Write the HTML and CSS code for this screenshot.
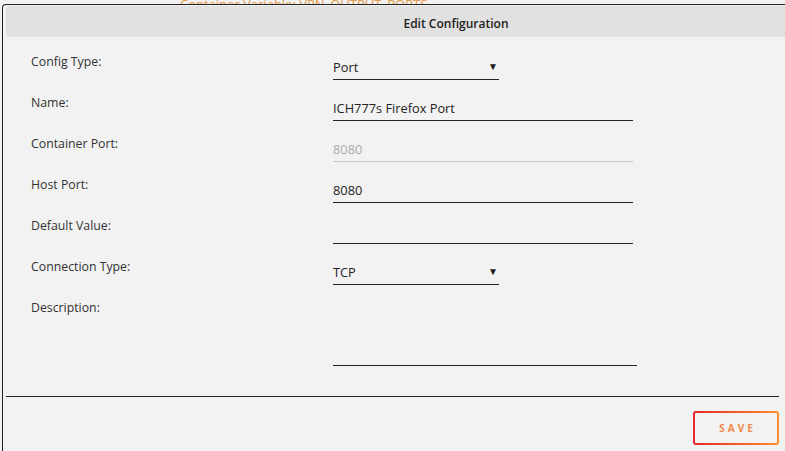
FILE: index.html
```html
<!DOCTYPE html>
<html lang="en">

<head>
    <meta charset="UTF-8">
    <meta name="viewport" content="width=device-width, initial-scale=1.0">
    <title>Edit Configuration</title>
    <link rel="stylesheet" href="styles.css">
</head>

<body>
    <div class="behind">
        <span>Container Variable: VPN_OUTPUT_PORTS</span>
    </div>

    <div class="modal">
        <div class="modal-head">Edit Configuration</div>

        <div class="form">
            <div class="row">
                <label>Config Type:</label>
                <div class="field select">
                    <span>Port</span>
                    <i class="arrow">&#9660;</i>
                </div>
            </div>
            <div class="row">
                <label>Name:</label>
                <div class="field">ICH777s Firefox Port</div>
            </div>
            <div class="row">
                <label>Container Port:</label>
                <div class="field disabled">8080</div>
            </div>
            <div class="row">
                <label>Host Port:</label>
                <div class="field">8080</div>
            </div>
            <div class="row">
                <label>Default Value:</label>
                <div class="field"></div>
            </div>
            <div class="row">
                <label>Connection Type:</label>
                <div class="field select">
                    <span>TCP</span>
                    <i class="arrow">&#9660;</i>
                </div>
            </div>
            <div class="row row-desc">
                <label>Description:</label>
                <div class="field area"></div>
            </div>
        </div>

        <div class="modal-foot">
            <a href="javascript:;" class="btn-save"><span>SAVE</span></a>
        </div>
    </div>
</body>

</html>
```

FILE: styles.css
```css
* {
    margin: 0;
    padding: 0;
    box-sizing: border-box;
}

body {
    background-color: #f2f2f2;
    font-family: "Open Sans", "Noto Sans", sans-serif;
    color: #333;
    overflow: hidden;
}

/* page text behind the modal */
.behind {
    height: 4px;
    overflow: hidden;
    display: flex;
    align-items: flex-end;
    padding-left: 180px;
    background-color: #f2f2f2;
}

.behind span {
    display: block;
    font-size: 13px;
    line-height: 13px;
    color: #e39a4c;
    white-space: nowrap;
    margin-bottom: -7px;
}

.modal {
    width: 904px;
    margin-left: 2px;
    padding: 1px 0 0 3px;
    border-top: 1px solid #222;
    border-left: 1px solid #222;
    border-top-left-radius: 4px;
    background-color: #f2f2f2;
    height: 460px;
}

.modal-head {
    height: 31px;
    padding-top: 3px;
    border-radius: 4px;
    background-color: #e1e1e1;
    display: flex;
    align-items: center;
    justify-content: center;
    font-size: 12px;
    font-weight: 600;
    color: #222;
}

.form {
    padding: 13px 0 0 25px;
}

.row {
    display: grid;
    grid-template-columns: 302px auto;
    height: 41px;
}

.row label {
    display: block;
    font-size: 12.3px;
    line-height: 16px;
    padding-top: 4px;
    color: #333;
}

.field {
    width: 300px;
    height: 30px;
    padding-top: 9px;
    font-size: 12.8px;
    line-height: 16px;
    color: #222;
    border-bottom: 1px solid #222;
}

.field.disabled {
    color: #aaa;
    border-bottom-color: #c8c8c8;
}

.field.select {
    width: 166px;
    display: flex;
    justify-content: space-between;
}

.arrow {
    font-style: normal;
    font-size: 10px;
    line-height: 14px;
    color: #1a1a1a;
    margin-right: 1px;
}

.row-desc {
    height: 70px;
}

.field.area {
    width: 304px;
    height: 70px;
}

.modal-foot {
    width: 773px;
    margin-top: 30px;
    padding-top: 14px;
    border-top: 1px solid #222;
    display: flex;
    justify-content: flex-end;
}

.btn-save {
    display: flex;
    align-items: center;
    justify-content: center;
    width: 86px;
    height: 34px;
    border: 2px solid transparent;
    border-radius: 3px;
    background: linear-gradient(#f2f2f2, #f2f2f2) padding-box,
        linear-gradient(90deg, #e52a2a, #ff8d2e) border-box;
    text-decoration: none;
}

.btn-save span {
    font-size: 10px;
    font-weight: 700;
    letter-spacing: 3px;
    margin-right: -3px;
    color: #f4894a;
}
```
